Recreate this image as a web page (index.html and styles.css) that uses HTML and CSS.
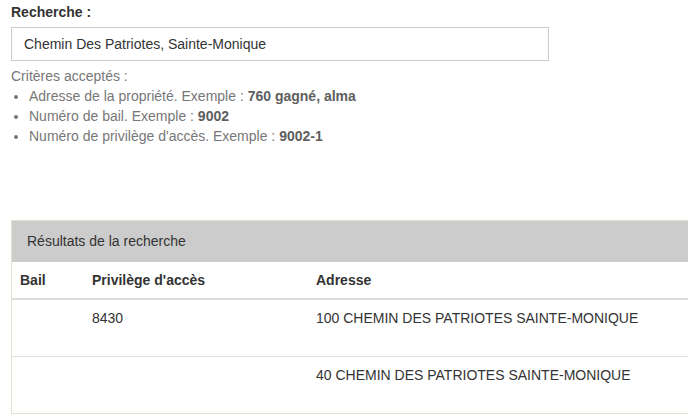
FILE: index.html
```html
<!DOCTYPE html>
<html lang="fr">
<head>
<meta charset="utf-8">
<title>Recherche</title>
<link rel="stylesheet" href="styles.css">
</head>
<body>
<div class="page">
  <label class="label" for="q">Recherche :</label>
  <input id="q" class="field" type="text" value="Chemin Des Patriotes, Sainte-Monique">
  <div class="help">
    <div>Critères acceptés :</div>
    <ul class="criteria">
      <li>Adresse de la propriété. Exemple : <b>760 gagné, alma</b></li>
      <li>Numéro de bail. Exemple : <b>9002</b></li>
      <li>Numéro de privilège d'accès. Exemple : <b>9002-1</b></li>
    </ul>
  </div>
  <div class="panel">
    <div class="panel-heading">Résultats de la recherche</div>
    <table class="results">
      <thead>
        <tr><th class="c-bail">Bail</th><th class="c-priv">Privilège d'accès</th><th>Adresse</th></tr>
      </thead>
      <tbody>
        <tr><td></td><td>8430</td><td>100 CHEMIN DES PATRIOTES SAINTE-MONIQUE</td></tr>
        <tr><td></td><td></td><td>40 CHEMIN DES PATRIOTES SAINTE-MONIQUE</td></tr>
      </tbody>
    </table>
  </div>
</div>
</body>
</html>
```
FILE: styles.css
```css
html, body {
  margin: 0;
  padding: 0;
  background: #fff;
  overflow: hidden;
}
body {
  font-family: "Liberation Sans", Arial, sans-serif;
  font-size: 14px;
  line-height: 20px;
  color: #333;
}
.page {
  padding: 2px 0 0 11px;
  overflow: hidden;
}
.label {
  display: block;
  font-weight: bold;
  margin-bottom: 5px;
}
.field {
  display: block;
  box-sizing: border-box;
  width: 538px;
  height: 34px;
  margin: 0;
  padding: 6px 12px;
  border: 1px solid #ccc;
  border-radius: 0;
  font-family: inherit;
  font-size: 14px;
  line-height: 20px;
  color: #333;
  background: #fff;
}
.help {
  margin-top: 5px;
  color: #777;
}
.help b {
  color: #5e5e5e;
}
.criteria {
  margin: 0;
  padding-left: 18px;
}
.panel {
  margin-top: 74px;
  margin-right: -20px;
  border: 1px solid #dde4d3;
  background: #fff;
}
.panel-heading {
  background: #ccc;
  padding: 10px 15px 11px;
  color: #333;
}
.results {
  width: 100%;
  border-collapse: collapse;
  border-spacing: 0;
}
.results th,
.results td {
  text-align: left;
  vertical-align: top;
  padding: 8px;
  line-height: 20px;
}
.results th {
  font-weight: bold;
  border-bottom: 2px solid #ddd;
}
.results td {
  border-top: 1px solid #ddd;
  padding-bottom: 28px;
}
.results tbody tr:first-child td {
  border-top: 0;
}
.c-bail {
  width: 56px;
}
.c-priv {
  width: 208px;
}
```
